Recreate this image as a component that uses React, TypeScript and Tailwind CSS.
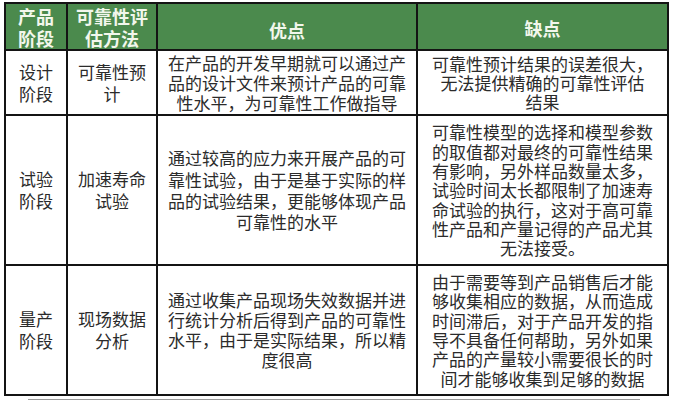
import React from "react";

const font = { fontFamily: '"Noto Sans CJK SC", "Noto Sans", sans-serif' };

function Lines({ lines }: { lines: string[] }) {
  return (
    <>
      {lines.map((l, i) => (
        <div key={i} className="whitespace-nowrap">
          {l}
        </div>
      ))}
    </>
  );
}

const H = "bg-[#4b8a4d] text-[#f2f7ec] font-bold text-[18px] leading-[22px] flex flex-col items-center justify-center text-center";
const C12 = "bg-white text-[#2b2b2b] text-[17px] leading-[22px] flex flex-col items-center justify-center text-center";
const C3 = "bg-white text-[#2b2b2b] text-[17px] leading-[20px] flex flex-col items-center justify-center text-center";
const C4 = "bg-white text-[#2b2b2b] text-[17px] leading-[19.3px] flex flex-col items-center justify-center text-center";

export default function App() {
  return (
    <div className="w-[678px] h-[401px] bg-white relative overflow-hidden" style={font}>
      <div className="pt-[2px] pl-[4px]">
        <div className="grid w-[665px] grid-cols-[60px_88px_258px_249px] grid-rows-[45px_63px_148px_128px] gap-[2px] p-[2px] bg-[#141414]">
          <div className={H}><Lines lines={["产品", "阶段"]} /></div>
          <div className={H}><Lines lines={["可靠性评", "估方法"]} /></div>
          <div className={H + " pt-[6px]"}><Lines lines={["优点"]} /></div>
          <div className={H + " pt-[2px]"}><Lines lines={["缺点"]} /></div>

          <div className={C12}><Lines lines={["设计", "阶段"]} /></div>
          <div className={C12}><Lines lines={["可靠性预", "计"]} /></div>
          <div className={C3}>
            <Lines lines={["在产品的开发早期就可以通过产", "品的设计文件来预计产品的可靠", "性水平，为可靠性工作做指导"]} />
          </div>
          <div className={C4}>
            <Lines lines={["可靠性预计结果的误差很大，", "无法提供精确的可靠性评估", "结果"]} />
          </div>

          <div className={C12}><Lines lines={["试验", "阶段"]} /></div>
          <div className={C12}><Lines lines={["加速寿命", "试验"]} /></div>
          <div className={C3 + " leading-[21.3px]"}>
            <Lines lines={["通过较高的应力来开展产品的可", "靠性试验，由于是基于实际的样", "品的试验结果，更能够体现产品", "可靠性的水平"]} />
          </div>
          <div className={C4}>
            <Lines
              lines={[
                "可靠性模型的选择和模型参数",
                "的取值都对最终的可靠性结果",
                "有影响，另外样品数量太多，",
                "试验时间太长都限制了加速寿",
                "命试验的执行，这对于高可靠",
                "性产品和产量记得的产品尤其",
                "无法接受。",
              ]}
            />
          </div>

          <div className={C12}><Lines lines={["量产", "阶段"]} /></div>
          <div className={C12}><Lines lines={["现场数据", "分析"]} /></div>
          <div className={C3}>
            <Lines lines={["通过收集产品现场失效数据并进", "行统计分析后得到产品的可靠性", "水平，由于是实际结果，所以精", "度很高"]} />
          </div>
          <div className={C4}>
            <Lines
              lines={[
                "由于需要等到产品销售后才能",
                "够收集相应的数据，从而造成",
                "时间滞后，对于产品开发的指",
                "导不具备任何帮助，另外如果",
                "产品的产量较小需要很长的时",
                "间才能够收集到足够的数据",
              ]}
            />
          </div>
        </div>
      </div>
      <div className="ml-[28px] mt-[3px] w-[612px] h-[1px] bg-[#9a9a9a]" />
    </div>
  );
}
